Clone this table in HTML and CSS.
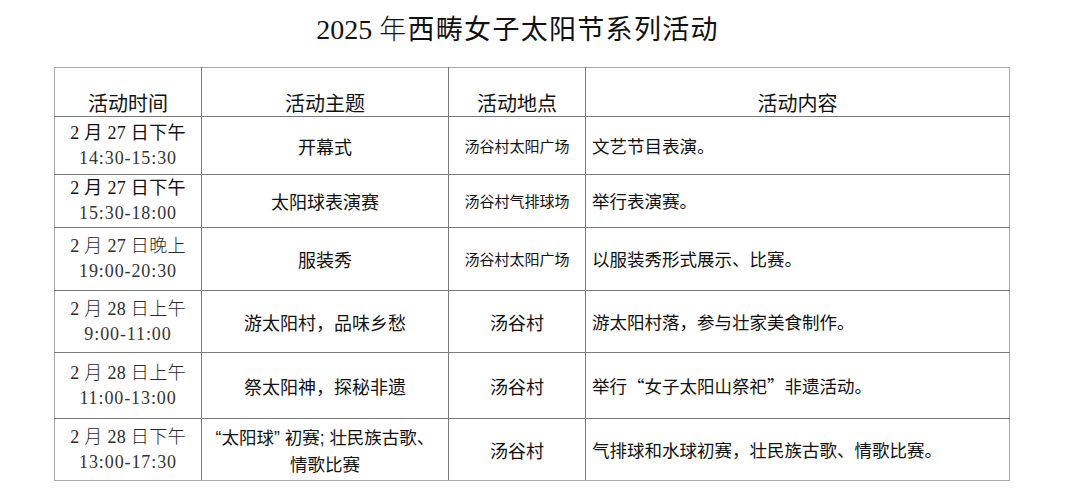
FILE: index.html
```html
<!DOCTYPE html>
<html lang="zh-CN">
<head>
<meta charset="utf-8">
<title>2025年西畴女子太阳节系列活动</title>
<link rel="stylesheet" href="styles.css">
</head>
<body>
<div class="page">
  <h1 class="title"><span class="serif">2025 </span><span class="light">年</span>西畴女子太阳节系列活动</h1>
  <table class="schedule">
    <colgroup>
      <col class="c-time">
      <col class="c-theme">
      <col class="c-place">
      <col class="c-content">
    </colgroup>
    <thead>
      <tr class="h-head">
        <th>活动时间</th>
        <th>活动主题</th>
        <th>活动地点</th>
        <th>活动内容</th>
      </tr>
    </thead>
    <tbody>
      <tr class="h1r">
        <td class="time"><div class="date strong">2 月 27 日下午</div><div class="hours">14:30-15:30</div></td>
        <td class="theme">开幕式</td>
        <td class="place small">汤谷村太阳广场</td>
        <td class="content">文艺节目表演。</td>
      </tr>
      <tr class="h2r">
        <td class="time"><div class="date strong">2 月 27 日下午</div><div class="hours">15:30-18:00</div></td>
        <td class="theme">太阳球表演赛</td>
        <td class="place small">汤谷村气排球场</td>
        <td class="content">举行表演赛。</td>
      </tr>
      <tr class="h3r">
        <td class="time"><div class="date">2 月 27 日晚上</div><div class="hours">19:00-20:30</div></td>
        <td class="theme">服装秀</td>
        <td class="place small">汤谷村太阳广场</td>
        <td class="content">以服装秀形式展示、比赛。</td>
      </tr>
      <tr class="h4r">
        <td class="time"><div class="date">2 月 28 日上午</div><div class="hours">9:00-11:00</div></td>
        <td class="theme">游太阳村，品味乡愁</td>
        <td class="place">汤谷村</td>
        <td class="content">游太阳村落，参与壮家美食制作。</td>
      </tr>
      <tr class="h5r">
        <td class="time"><div class="date">2 月 28 日上午</div><div class="hours">11:00-13:00</div></td>
        <td class="theme">祭太阳神，探秘非遗</td>
        <td class="place">汤谷村</td>
        <td class="content">举行“女子太阳山祭祀”非遗活动。</td>
      </tr>
      <tr class="h6r">
        <td class="time"><div class="date">2 月 28 日下午</div><div class="hours">13:00-17:30</div></td>
        <td class="theme two"><span class="latin">“</span>太阳球<span class="latin">” </span>初赛<span class="latin">; </span>壮民族古歌、<br>情歌比赛</td>
        <td class="place">汤谷村</td>
        <td class="content">气排球和水球初赛，壮民族古歌、情歌比赛。</td>
      </tr>
    </tbody>
  </table>
</div>
</body>
</html>
```

FILE: styles.css
```css
html, body {
  margin: 0;
  padding: 0;
  background: #ffffff;
}

body {
  font-family: "Noto Sans CJK SC", "Noto Sans", sans-serif;
  color: #111111;
}

.page {
  width: 1080px;
  height: 501px;
  overflow: hidden;
}

.title {
  margin: 0;
  padding: 10px 45px 0 0;
  height: 57px;
  box-sizing: border-box;
  text-align: center;
  font-size: 27px;
  font-weight: normal;
  line-height: 36px;
  letter-spacing: 1.3px;
  color: #111111;
}

.title .serif {
  font-family: "Liberation Serif", "Noto Sans CJK SC", serif;
  font-size: 28px;
  letter-spacing: 0;
}

.title .light {
  font-weight: 300;
}

.schedule {
  margin: 10px 0 0 54px;
  width: 955px;
  border-collapse: collapse;
  table-layout: fixed;
  border: 1px solid #a8a8a8;
}

.c-time { width: 147px; }
.c-theme { width: 247px; }
.c-place { width: 137px; }
.c-content { width: 424px; }

.schedule th,
.schedule td {
  border: 1px solid #7a7a7a;
  padding: 0;
  text-align: center;
  vertical-align: middle;
}

.schedule thead th {
  border-top-color: #a8a8a8;
  font-size: 20px;
  font-weight: normal;
  line-height: 24px;
  vertical-align: bottom;
  padding-bottom: 1px;
}

.schedule th:first-child,
.schedule td:first-child {
  border-left-color: #a8a8a8;
}

.schedule th:last-child,
.schedule td:last-child {
  border-right-color: #a8a8a8;
}

.schedule tbody tr:last-child td {
  border-bottom-color: #a8a8a8;
}

.h-head { height: 49px; }
.h1r { height: 58px; }
.h2r { height: 53px; }
.h3r { height: 63px; }
.h4r { height: 62px; }
.h5r { height: 66px; }
.h6r { height: 62px; }

.time {
  font-family: "Liberation Serif", "Noto Sans CJK SC", serif;
  font-size: 18px;
  line-height: 25px;
  color: #2a2a2a;
}

.time .date {
  letter-spacing: 0.3px;
  font-weight: 300;
}

.time .date.strong {
  font-weight: normal;
  color: #111111;
}

.time .hours {
  letter-spacing: 0.9px;
  color: #333333;
}

.theme {
  font-size: 18px;
  line-height: 26px;
}

.theme.two {
  font-size: 17.5px;
  line-height: 26px;
  padding-top: 2px;
}

.theme .latin {
  font-family: "Liberation Sans", sans-serif;
}

.place {
  font-size: 18px;
  line-height: 24px;
}

.place.small {
  font-size: 15px;
}

.schedule td.content {
  text-align: left;
  padding-left: 6px;
  font-size: 17.5px;
  line-height: 24px;
}
```
